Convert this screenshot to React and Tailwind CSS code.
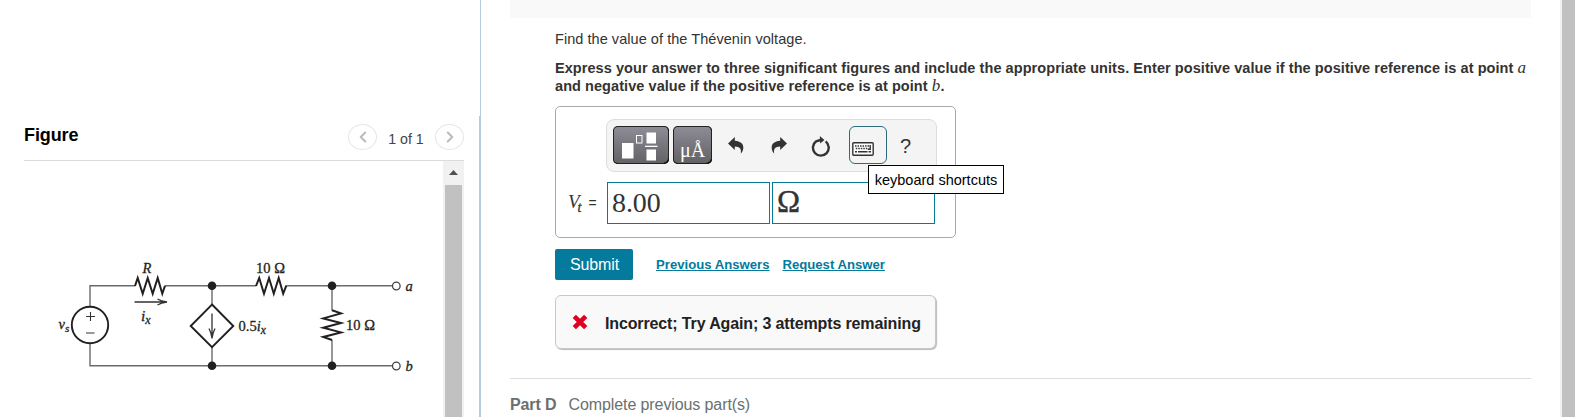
import { ChevronLeft, ChevronRight } from 'lucide-react';

const MATH = 'Liberation Serif, serif';

function Circuit() {
  return (
    <svg width="419" height="256" viewBox="24 161 419 256" className="block shrink-0" fill="none">
      {/* Wires */}
      <g stroke="#6b6b6b" strokeWidth="1.4">
        <path d="M90 306.5V285.7H135M165 285.7H256M286.3 285.7H392.5" />
        <path d="M90 343.5V365.7H392.5" />
        <path d="M212 285.7V304.5M212 347V365.7" />
        <path d="M332 285.7V310.5M332 340V365.7" />
      </g>

      {/* Resistors */}
      <g stroke="#231f20" strokeWidth="2" strokeLinejoin="miter">
        <path d="M135 286L137.7 278L142.7 293.7L147.7 278L152.7 293.7L157.7 278L162.3 293.7L165 285.7" />
        <path d="M256 286L259.2 278L264 293.7L269 278L273.8 293.7L278.7 278L283.2 293.7L286.3 285.7" />
        <path d="M332 310.3L341 313.4L323.2 318.4L341 323L323.2 327.8L341 332.4L323.2 337L332 340" />
      </g>

      {/* Sources */}
      <g stroke="#231f20" strokeWidth="1.9">
        <circle cx="90" cy="325" r="18.2" />
        <path d="M212 304.5L233.3 326L212 347.2L190.7 326Z" />
      </g>
      <path d="M86 316.5H95M90.5 312V321M86 333H94.5" stroke="#333" strokeWidth="1.1" />
      <path d="M212 313.5V337M209 328.5Q211 332 212 338.5Q213 332 215 328.5" stroke="#333" strokeWidth="1.3" />
      <path d="M134.5 302H166M157.5 299Q161 301.3 167 302Q161 302.7 157.5 305" stroke="#333" strokeWidth="1.3" />

      <g fill="#231f20">
        <circle cx="212" cy="285.7" r="4.3" />
        <circle cx="212" cy="365.7" r="4.3" />
        <circle cx="332" cy="285.7" r="4.3" />
        <circle cx="332" cy="365.7" r="4.3" />
      </g>
      <g fill="#fff" stroke="#444" strokeWidth="1.3">
        <circle cx="396.3" cy="286" r="3.8" />
        <circle cx="396.3" cy="366" r="3.8" />
      </g>

      {/* Labels */}
      <g fill="#231f20" stroke="#231f20" strokeWidth="0.3" fontFamily={MATH} fontSize="14.5">
        <text x="142.5" y="272.7" fontStyle="italic">R</text>
        <text x="256" y="272.7">10 Ω</text>
        <text x="346" y="330.3">10 Ω</text>
        <text x="58.5" y="329" fontStyle="italic">v<tspan fontSize="11" dy="3">s</tspan></text>
        <text x="141" y="320.5" fontStyle="italic" fontSize="15.5">i<tspan fontSize="12" dy="3">x</tspan></text>
        <text x="238.5" y="331.3">0.5<tspan fontStyle="italic">i</tspan><tspan fontStyle="italic" fontSize="11.5" dy="3">x</tspan></text>
        <text x="405.5" y="290.5" fontStyle="italic">a</text>
        <text x="405.5" y="370.5" fontStyle="italic">b</text>
      </g>
    </svg>
  );
}

function TemplatesIcon() {
  return (
    <svg width="56" height="38" viewBox="0 0 56 38" className="block">
      <rect x="9" y="17" width="11.5" height="15.5" fill="#fff" />
      <rect x="23.5" y="9.5" width="5.5" height="7.5" fill="none" stroke="#fff" />
      <rect x="33.5" y="6.5" width="9.5" height="11" fill="#fff" />
      <rect x="32" y="19.7" width="12.5" height="1.3" fill="#fff" />
      <rect x="33.5" y="23.5" width="9.5" height="11" fill="#fff" />
    </svg>
  );
}

function UndoIcon({ flip }) {
  return (
    <svg width="16" height="17" viewBox="0 0 16 17" className={flip ? 'block -scale-x-100' : 'block'}>
      <path d="M0 6.5L6.8 0V3.7C12.5 4 15.8 7 15.3 11.2C15.1 13.5 14.2 15.2 12.8 16.6C13.6 12 11.8 9.7 6.8 9.6V13Z" fill="#333" />
    </svg>
  );
}

function ResetIcon() {
  return (
    <svg width="19" height="21" viewBox="0 0 19 21" className="block">
      <path d="M9.5 4L5.2 5.3A7.9 7.9 0 1 0 14.6 5.4" fill="none" stroke="#333" strokeWidth="2.4" />
      <path d="M8.8 0L13.4 4L9.2 7.6Z" fill="#333" />
    </svg>
  );
}

function KeyboardIcon() {
  return (
    <svg width="22" height="14" viewBox="0 0 22 14" className="block">
      <rect x="0.8" y="0.8" width="20.4" height="12.4" rx="1" fill="#fff" stroke="#333" strokeWidth="1.4" />
      <path d="M3 3.9H17M3.8 6.5H16.5" stroke="#333" strokeWidth="1.5" strokeDasharray="1.5 1" />
      <path d="M18.2 3V7.3H15.8" fill="none" stroke="#333" strokeWidth="1.4" />
      <path d="M3 9.8H5M6 9.8H15.5M16.5 9.8H19" stroke="#333" strokeWidth="1.4" />
    </svg>
  );
}

function FigurePanel() {
  return (
    <div className="flex w-[479px] shrink-0 flex-col pl-6 pr-[15px] pt-[124px]">
      <div className="flex h-[37px] shrink-0 items-start border-b border-[#dcdcdc]">
        <h2 className="mt-[1px] flex-1 text-[18px] leading-5 font-bold tracking-[-0.1px] text-black">Figure</h2>
        <button className="flex h-[26px] w-[29px] items-center justify-center rounded-[50%] border border-[#e6e6e6] text-[#bbb]">
          <ChevronLeft className="h-[18px] w-[18px]" strokeWidth={2.8} />
        </button>
        <span className="mt-[5px] w-[58px] text-center text-[14.2px] leading-5 text-[#444]">1 of 1</span>
        <button className="flex h-[26px] w-[29px] items-center justify-center rounded-[50%] border border-[#e6e6e6] text-[#bbb]">
          <ChevronRight className="h-[18px] w-[18px]" strokeWidth={2.8} />
        </button>
      </div>
      <div className="flex h-[256px]">
        <Circuit />
        <div className="flex w-[21px] flex-col items-center bg-[#f1f1f1] pt-[9px]">
          <svg width="9" height="5" viewBox="0 0 9 5" className="block">
            <path d="M0 5L4.5 0L9 5Z" fill="#505050" />
          </svg>
          <div className="mt-[10px] w-[17px] flex-1 bg-[#c1c1c1]" />
        </div>
      </div>
    </div>
  );
}

function AnswerBox() {
  return (
    <div className="relative h-[132px] w-[401px] rounded-[5px] border border-[#aaa] pt-3 pl-[50px]">
      <div className="flex h-[53px] w-[331px] items-start rounded-lg border border-[#ddd] bg-[#f4f4f4] pt-1.5 pl-1.5">
        <button className="h-[38px] w-[56px] rounded-[5px] bg-linear-to-b from-[#8f8d97] to-[#626164] shadow-[inset_0_0_0_1px_#222,inset_-1px_-1px_0_0_#000]">
          <TemplatesIcon />
        </button>
        <button className="ml-1 h-[38px] w-[39px] rounded-[5px] bg-linear-to-b from-[#8f8d97] to-[#626164] pt-2.5 font-['Liberation_Serif',serif] text-[20px] leading-7 text-white shadow-[inset_0_0_0_1px_#222,inset_-1px_-1px_0_0_#000]">
          μÅ
        </button>
        <div className="mt-[11px] ml-[16px]"><UndoIcon /></div>
        <div className="mt-[11px] ml-[27px]"><UndoIcon flip /></div>
        <div className="mt-[10px] ml-[24px]"><ResetIcon /></div>
        <button className="ml-[19px] h-[38px] w-[38px] rounded-[6px] border border-[#2d6b7c] pt-[7px] pl-[2px]">
          <KeyboardIcon />
        </button>
        <span className="mt-[8px] ml-[13px] text-[20px] leading-6 text-[#333]">?</span>
      </div>
      <div className="mt-[10px] -ml-[50px] flex h-[42px] items-center">
        <div className="flex w-[51px] items-baseline pb-0.5 pl-[12px] text-[#333]">
          <span className="font-['Liberation_Serif',serif] text-[19px] leading-6 italic">V</span>
          <span className="relative top-1 -ml-[2px] font-['Liberation_Serif',serif] text-[14px] leading-none italic [-webkit-text-stroke:0.3px_#333]">t</span>
          <span className="ml-[7px] text-[14px] leading-none">=</span>
        </div>
        <div className="h-[42px] w-[163px] border border-[#047a9c] bg-white pl-1 font-['Liberation_Serif',serif] text-[28px] leading-[39px] tracking-[-0.1px] text-[#333]">
          8.00
        </div>
        <div className="ml-0.5 h-[42px] w-[163px] border border-[#047a9c] bg-white pl-1 font-['Liberation_Serif',serif] text-[31px] leading-[37px] text-[#333] [-webkit-text-stroke:0.4px_#333]">
          Ω
        </div>
      </div>
      <div className="absolute top-[58px] left-[312px] flex h-[29px] w-[136px] items-center justify-center border border-black bg-white pt-0.5 text-[14.5px] whitespace-nowrap text-black">
        keyboard shortcuts
      </div>
    </div>
  );
}

export default function App() {
  return (
    <div className="flex h-[417px] w-[1575px] overflow-hidden bg-white font-['Liberation_Sans',Arial,sans-serif]">
      <FigurePanel />
      <div className="flex w-0.5 shrink-0 flex-col items-end">
        <div className="h-[116px] w-px bg-[#b8cce0]" />
        <div className="w-0.5 flex-1 bg-[#b8cce0]" />
      </div>

      <main className="w-[1079px] shrink-0 pr-[29px] pl-[29px]">
        <div className="h-[18px] bg-[#f9f9f9]" />
        <div className="pl-[45px] text-[#333]">
          <p className="pt-3 text-[14.5px] leading-[18px] tracking-[0.05px] whitespace-nowrap">Find the value of the Thévenin voltage.</p>
          <p className="mt-[11px] h-[36px] text-[14.5px] leading-[18px] font-bold tracking-[0.065px] whitespace-nowrap">
            Express your answer to three significant figures and include the appropriate units. Enter positive value if the positive reference is at point{' '}
            <span className="font-['Liberation_Serif',serif] text-[17px] leading-none font-normal italic">a</span>
            <br />
            and negative value if the positive reference is at point{' '}
            <span className="font-['Liberation_Serif',serif] text-[17px] leading-none font-normal italic">b</span>.
          </p>
          <div className="mt-[11px]">
            <AnswerBox />
          </div>
          <div className="mt-[11px] flex h-[31px] items-center">
            <button className="h-[31px] w-[78px] rounded-xs bg-[#047a9c] pl-px text-[16px] tracking-[-0.1px] text-white">Submit</button>
            <a className="mt-px ml-[23px] text-[13.15px] font-bold text-[#047a9c] underline">Previous Answers</a>
            <a className="mt-px ml-[13px] text-[13.15px] font-bold text-[#047a9c] underline">Request Answer</a>
          </div>
          <div className="mt-[15px] flex h-[54px] w-[381px] items-center rounded-[6px] border border-[#c8c8c8] bg-[#f9f9f9] pl-4 shadow-[1px_1px_1px_#bbb]">
            <svg width="16" height="16" viewBox="0 0 16 16">
              <path d="M2.3 2.3L13.7 13.7M13.7 2.3L2.3 13.7" stroke="#e00020" strokeWidth="4.6" />
            </svg>
            <span className="mt-[3px] ml-[17px] text-[16px] font-bold tracking-[-0.13px] whitespace-nowrap text-[#222]">Incorrect; Try Again; 3 attempts remaining</span>
          </div>
        </div>
        <div className="mt-[29px] flex border-t border-[#ddd] pt-4 text-[16px] leading-5 text-[#6a7070]">
          <span className="font-bold tracking-[-0.1px]">Part D</span>
          <span className="ml-3 tracking-[-0.1px]">Complete previous part(s)</span>
        </div>
      </main>

      <div className="w-[15px] shrink-0 bg-[#f1f1f1] pl-0.5">
        <div className="h-full bg-[#c1c1c1]" />
      </div>
    </div>
  );
}
